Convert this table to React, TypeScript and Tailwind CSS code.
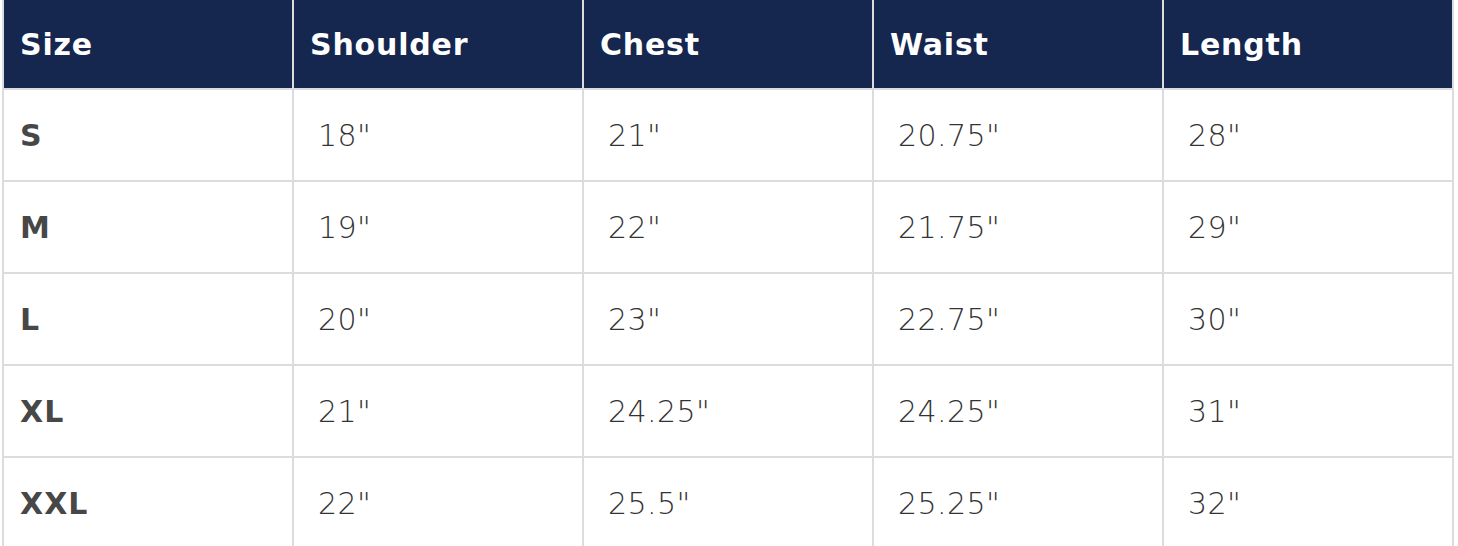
const headers = ['Size', 'Shoulder', 'Chest', 'Waist', 'Length']

const rows = [
  ['S', '18"', '21"', '20.75"', '28"'],
  ['M', '19"', '22"', '21.75"', '29"'],
  ['L', '20"', '23"', '22.75"', '30"'],
  ['XL', '21"', '24.25"', '24.25"', '31"'],
  ['XXL', '22"', '25.5"', '25.25"', '32"'],
]

export default function App() {
  return (
    <div className="w-[1458px] h-[546px] overflow-hidden bg-white" style={{ fontFamily: '"DejaVu Sans", "Noto Sans", sans-serif' }}>
      <div className="ml-[2px] w-[1452px] grid grid-cols-5 gap-[2px] bg-[#dcdcdc] px-[2px]">
        {headers.map(h => (
          <div key={h} className="h-[88px] bg-[#15274f] flex items-center px-[16px] text-[30px] font-bold text-white tracking-[0.8px]">
            {h}
          </div>
        ))}
        {rows.map(row =>
          row.map((cell, i) => (
            <div
              key={row[0] + i}
              className={
                i === 0
                  ? 'h-[90px] bg-white flex items-center px-[16px] text-[30px] font-bold text-[#474747] tracking-[1px]'
                  : 'h-[90px] bg-white flex items-center pl-[24px] text-[30px] font-light text-[#333333] tracking-[0.4px]'
              }
            >
              {cell}
            </div>
          ))
        )}
      </div>
    </div>
  )
}
